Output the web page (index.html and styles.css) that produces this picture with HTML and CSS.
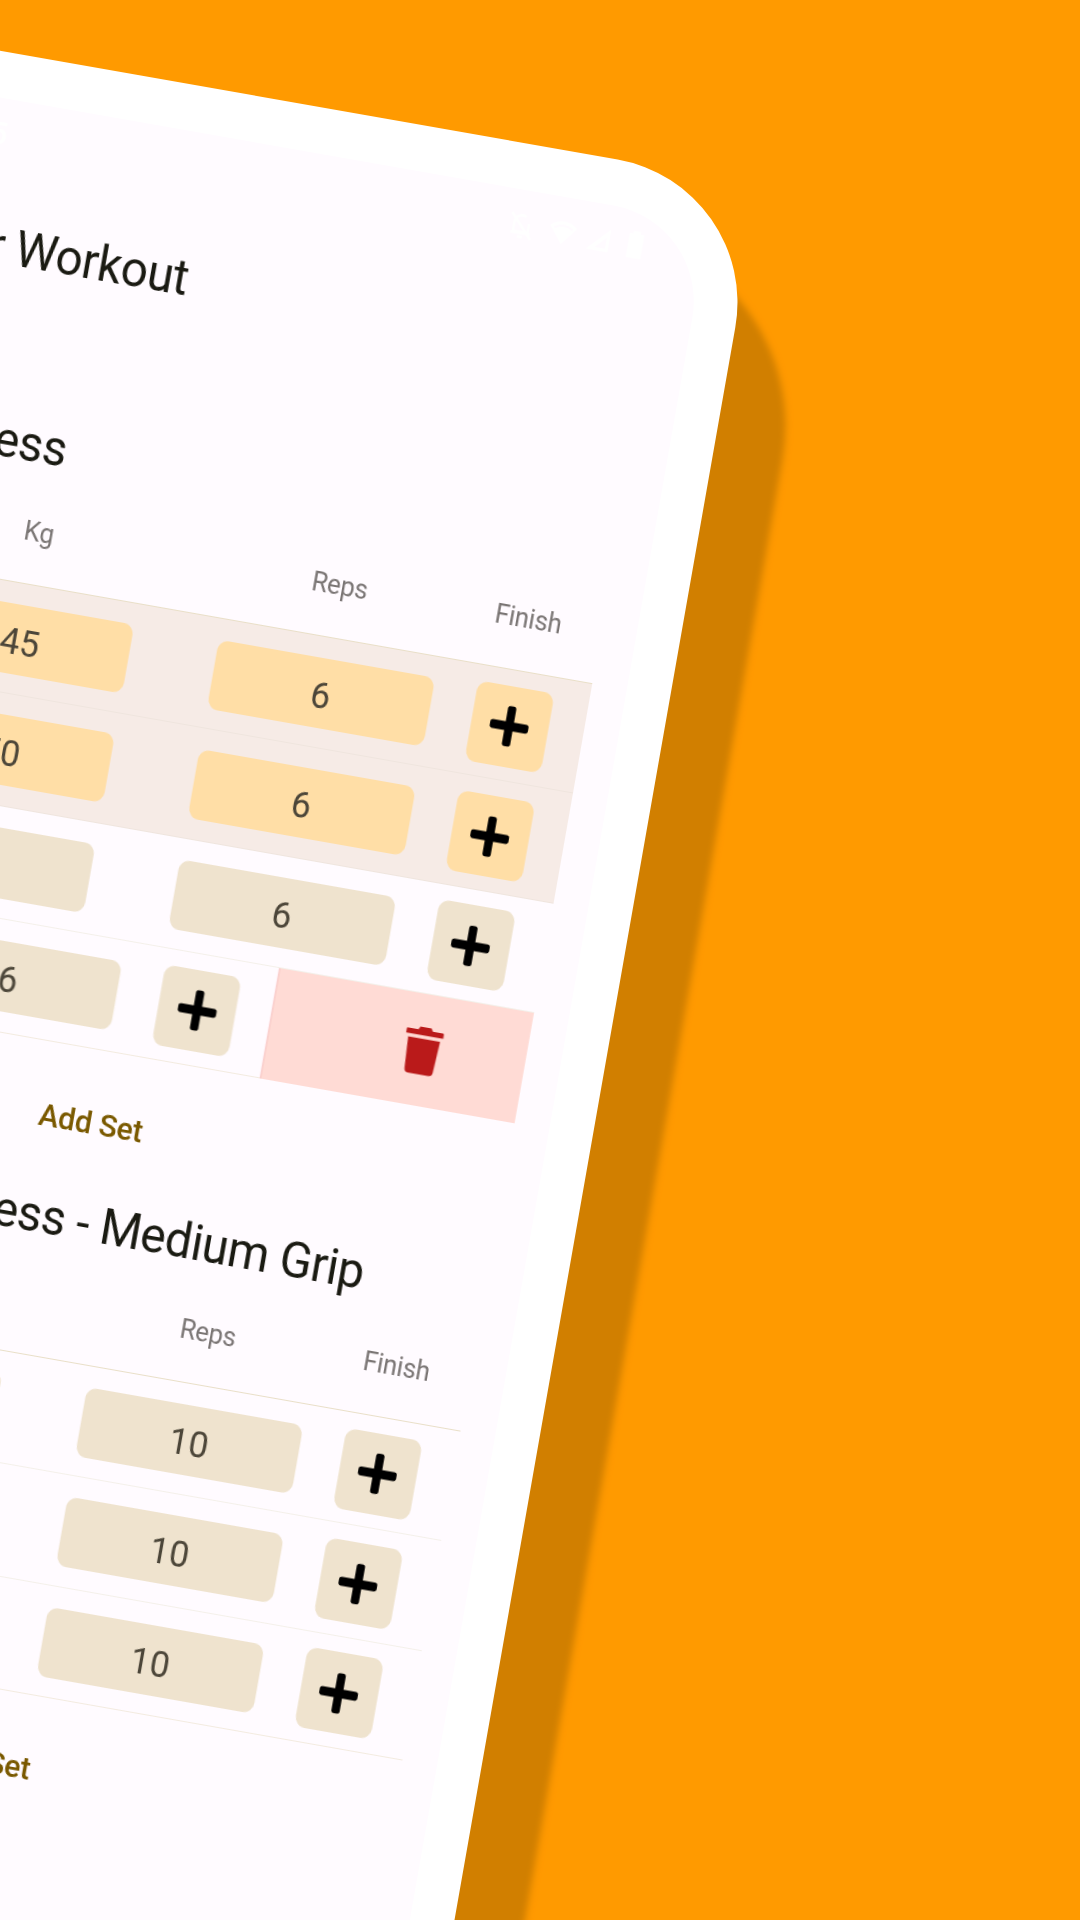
FILE: index.html
```html
<!DOCTYPE html>
<html lang="en">
<head>
<meta charset="utf-8">
<title>Your Workout</title>
<link rel="stylesheet" href="styles.css">
</head>
<body>
<svg width="0" height="0" class="defs">
  <symbol id="plus" viewBox="0 0 42 42"><rect x="0.7" y="16.6" width="40.6" height="8.8" rx="2.8"/><rect x="16.6" y="0.7" width="8.8" height="40.6" rx="2.8"/></symbol>
</svg>
<main class="stage">
  <div class="phone">
    <div class="screen">
      <div class="content">
        <div class="status">
          <span class="clock">10:35</span>
          <svg viewBox="0 0 24 24"><path d="M6 17V10a6 6 0 0 1 9-5M18 10v7H6M4 18h16M3 3l18 19M10 21h4" fill="none" stroke="#fff" stroke-width="2"/></svg>
          <svg class="wifi" viewBox="0 0 24 24"><path d="M12 21 1 7.500C7.500 2 16.500 2 23 7.500z" fill="#fff"/><path d="M4.500 9c4.500-3.300 10.500-3.300 15 0" fill="none" stroke="#fffbff" stroke-width="1.500"/></svg>
          <svg viewBox="0 0 24 24"><path d="M21 3v18H3zM18.500 10l-8.500 8.500h8.500z" fill="#fff" fill-rule="evenodd"/></svg>
          <svg viewBox="0 0 24 24"><path d="M9 1h6v2h3v19H6V3h3z" fill="#fff"/></svg>
        </div>
        <header class="appbar"><h1>Your Workout</h1></header>

        <section class="exercise">
          <h2 class="short">Bench Press</h2>
          <div class="row head"><span></span><span>Kg</span><span>Reps</span><span>Finish</span></div>
          <div class="row done"><span></span><b class="field">45</b><b class="field">6</b><button class="add"><svg><use href="#plus"/></svg></button></div>
          <div class="row done"><span></span><b class="field">50</b><b class="field">6</b><button class="add"><svg><use href="#plus"/></svg></button></div>
          <div class="row"><span></span><b class="field"></b><b class="field">6</b><button class="add"><svg><use href="#plus"/></svg></button></div>
          <div class="swipe">
            <div class="row last"><span></span><b class="field"></b><b class="field">6</b><button class="add"><svg><use href="#plus"/></svg></button></div>
            <div class="delete"><svg viewBox="0 0 41 49"><path d="M1.500 3H12.500L14.500 0H26.500L28.500 3H39.500Q41 3 41 4.500V8.500H0V4.500Q0 3 1.500 3ZM3 12H38L36 44.500Q35.700 49 31.500 49H9.500Q5.300 49 5 44.500Z"/></svg></div>
          </div>
          <div class="addset">Add Set</div>
        </section>

        <section class="exercise">
          <h2>Press - Medium Grip</h2>
          <div class="row head"><span></span><span></span><span>Reps</span><span>Finish</span></div>
          <div class="row"><span></span><b class="field"></b><b class="field">10</b><button class="add"><svg><use href="#plus"/></svg></button></div>
          <div class="row"><span></span><b class="field"></b><b class="field">10</b><button class="add"><svg><use href="#plus"/></svg></button></div>
          <div class="row last"><span></span><b class="field"></b><b class="field">10</b><button class="add"><svg><use href="#plus"/></svg></button></div>
          <div class="addset">Add Set</div>
        </section>
      </div>
    </div>
  </div>
</main>
</body>
</html>
```
FILE: styles.css
```css
* { box-sizing: border-box; }
body { margin: 0; font-family: Roboto, "Liberation Sans", sans-serif; }
.defs { position: absolute; }
.stage { width: 1080px; height: 1920px; overflow: hidden; background: #ff9a00; display: flow-root; }

/* The device turns about the top-left corner of the stage. */
.phone {
  width: 993.5px;
  height: 2200px;
  margin: 50px 0 0 -213.5px;
  padding: 45.5px 44px 45.5px 44.5px;
  background: #fff;
  border-radius: 145px;
  box-shadow: 20px 122px 7px 49.5px #d17f00;
  transform: rotate(10deg);
  transform-origin: 213.5px -50px;
}
.screen { width: 905px; height: 2109px; border-radius: 97px; background: #fffbff; overflow: hidden; }
.content { width: 947.6px; padding: 0 37px; transform: scaleX(.955); transform-origin: 0 0; color: #1a1a12; }

.status { height: 71px; display: flex; align-items: center; justify-content: flex-end; gap: 8px; padding-right: 20px; color: #fff; }
.status svg { width: 31px; height: 31px; }
.status .wifi { width: 35px; margin: 0 -3px 0 3px; }
.clock { font-size: 32px; font-weight: 500; margin-right: auto; padding-left: 90px; }

.appbar { height: 148px; margin-bottom: 81px; padding-top: 2px; display: flex; align-items: center; justify-content: flex-end; padding-right: 490px; }
h1, h2 { margin: 0; font-size: 50px; font-weight: 400; white-space: nowrap; letter-spacing: -.5px; }
h2 { height: 70px; line-height: 73px; text-align: right; padding-right: 128px; }
h2.short { padding-right: 584px; }

.row {
  display: grid;
  grid-template-columns: 116.4px 319.6px 319.9px 81px;
  padding-right: 36.7px;
  height: 111.4px;
  align-items: center;
  justify-items: center;
  border-bottom: 1px solid #f4f0ea;
  color: #4c4639;
  font-size: 37px;
}
.head { height: 105.5px; font-size: 27px; letter-spacing: -.2px; color: #7a7574; border-bottom: 1.5px solid #e9dfc8; }
.done { background: #f6ebe6; border-bottom-color: #efe5de; }
.last { border-bottom-color: #f3ebe0; }
.field { width: 230.5px; height: 70px; line-height: 75px; margin-top: 1.5px; border-radius: 11px; background: #efe3ce; text-align: center; font-weight: 400; }
.add { width: 81px; height: 81px; margin-top: 2px; padding: 0; border: 0; border-radius: 11px; background: #efe3ce; display: grid; place-items: center; }
.add svg { width: 42px; height: 42px; }
.done .field, .done .add { background: #ffdea6; }

.swipe { display: flex; justify-content: flex-end; overflow: hidden; }
.swipe .row { flex: none; width: 873.6px; }
.delete { flex: none; width: 270.8px; background: #ffdbd5; border-left: 1px solid #f6bdba; display: flex; align-items: center; padding: 2px 0 0 140.8px; }
.delete svg { width: 40.5px; height: 47.5px; fill: #ba1a1a; }

.addset { height: 137.9px; padding-top: 8px; line-height: 131px; text-align: center; font-size: 31.7px; letter-spacing: -.2px; font-weight: 500; color: #7a5900; }
```
